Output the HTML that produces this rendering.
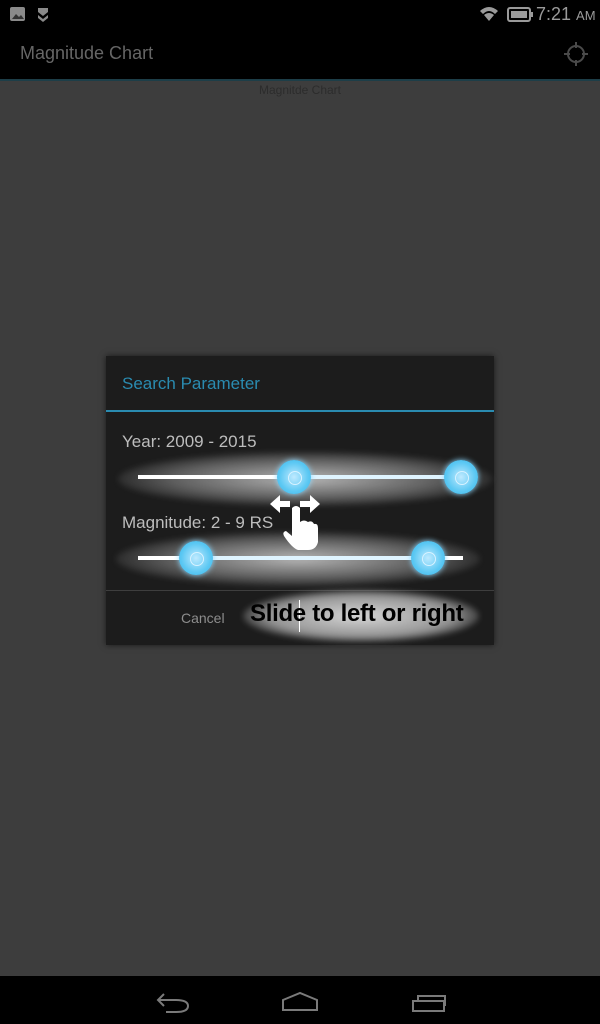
<!DOCTYPE html>
<html><head><meta charset="utf-8"><style>
*{margin:0;padding:0;box-sizing:border-box}
body{width:600px;height:1024px;background:#3d3d3d;position:relative;overflow:hidden;font-family:"Liberation Sans",sans-serif}
.abs{position:absolute}
.glow{position:absolute;background:radial-gradient(ellipse at center,rgba(220,220,220,.8) 0%,rgba(150,150,150,.55) 50%,rgba(40,40,40,0) 78%);border-radius:50%;filter:blur(3px)}
.knob{position:absolute;width:34px;height:34px;border-radius:50%;background:radial-gradient(circle,#bfeaff 0%,#5cc8f3 60%,#35b5ea 100%);box-shadow:0 0 6px #8fd9ff}
.knob:after{content:"";position:absolute;left:11px;top:11px;width:12px;height:12px;border-radius:50%;border:1px solid #d8f2ff}
</style></head><body>
<div class="abs" style="left:0;top:0;width:600px;height:79px;background:#000"></div>
<div class="abs" style="left:0;top:79px;width:600px;height:2px;background:#1d3e48"></div>
<svg class="abs" style="left:8px;top:5px" width="40" height="20"><rect x="2" y="2" width="15" height="14" rx="2" fill="#8a8a8a"/><path d="M4 14 L8 9 L11 12 L13 10 L16 14Z" fill="#333"/><path d="M30 3 L40 3 L40 7 L35 11 L30 7Z" fill="#8a8a8a"/><path d="M30 10 L35 14 L40 10 L40 13 L35 17 L30 13Z" fill="#8a8a8a"/></svg>
<svg class="abs" style="left:478px;top:3px" width="60" height="22"><path d="M2 8 Q11 0 20 8 L17 11 Q11 5 5 11Z M6 12 Q11 8 16 12 L11 18Z" fill="#9a9a9a"/><rect x="30" y="5" width="22" height="13" rx="2" fill="none" stroke="#9a9a9a" stroke-width="2"/><rect x="33" y="8" width="16" height="7" fill="#9a9a9a"/><rect x="53" y="9" width="2" height="5" fill="#9a9a9a"/></svg>
<div class="abs" style="left:536px;top:4px;color:#9a9a9a;font-size:18px">7:21 <span style="font-size:13px">AM</span></div>
<div class="abs" style="left:20px;top:43px;color:#666;font-size:18px">Magnitude Chart</div>
<svg class="abs" style="left:562px;top:40px" width="28" height="28"><circle cx="14" cy="14" r="8" fill="none" stroke="#4a4a4a" stroke-width="2"/><path d="M14 2V8M14 20V26M2 14H8M20 14H26" stroke="#4a4a4a" stroke-width="2"/></svg>
<div class="abs" style="left:0;top:83px;width:600px;text-align:center;color:#2c2c2c;font-size:12px">Magnitde Chart</div>

<div class="abs" style="left:106px;top:356px;width:388px;height:289px;background:#1c1c1c;box-shadow:0 0 6px rgba(0,0,0,.6)"></div>
<div class="abs" style="left:122px;top:374px;color:#2a8bb0;font-size:17px">Search Parameter</div>
<div class="abs" style="left:106px;top:410px;width:388px;height:2px;background:#2a8bb0"></div>
<div class="abs" style="left:122px;top:432px;color:#bdbdbd;font-size:17px">Year: 2009 - 2015</div>
<div class="glow" style="left:118px;top:452px;width:374px;height:54px"></div>
<div class="abs" style="left:138px;top:475px;width:325px;height:4px;background:#fff"></div>
<div class="abs" style="left:293px;top:475px;width:170px;height:4px;background:#dff4ff"></div>
<div class="knob" style="left:277px;top:460px"></div>
<div class="knob" style="left:444px;top:460px"></div>
<div class="abs" style="left:122px;top:513px;color:#bdbdbd;font-size:17px">Magnitude: 2 - 9 RS</div>
<div class="glow" style="left:116px;top:532px;width:364px;height:54px"></div>
<div class="abs" style="left:138px;top:556px;width:325px;height:4px;background:#fff"></div>
<div class="abs" style="left:196px;top:556px;width:232px;height:4px;background:#dff4ff"></div>
<div class="knob" style="left:179px;top:541px"></div>
<div class="knob" style="left:411px;top:541px"></div>
<svg class="abs" style="left:268px;top:492px" width="56" height="60"><path d="M2 12 L12 3 V9 H22 V15 H12 V21Z M52 12 L42 3 V9 H32 V15 H42 V21Z" fill="#fff"/><path d="M24 16 Q28 12 32 16 V30 Q36 27 40 30 Q44 28 46 32 Q50 31 50 36 V50 Q48 58 40 58 H30 Q24 56 16 44 Q14 40 18 39 L24 44Z" fill="#fff"/></svg>
<div class="abs" style="left:106px;top:590px;width:388px;height:1px;background:#3e3e3e"></div>
<div class="abs" style="left:181px;top:610px;color:#8d8d8d;font-size:14px">Cancel</div>
<div class="glow" style="left:243px;top:590px;width:236px;height:52px;background:radial-gradient(ellipse at center,rgba(235,235,235,.9) 0%,rgba(190,190,190,.75) 55%,rgba(40,40,40,0) 78%)"></div>
<div class="abs" style="left:299px;top:600px;width:1px;height:32px;background:#fff"></div>
<div class="abs" style="left:250px;top:600px;color:#000;font-size:24px;font-weight:bold;letter-spacing:-.3px">Slide to left or right</div>

<div class="abs" style="left:0;top:976px;width:600px;height:48px;background:#000"></div>
<svg class="abs" style="left:150px;top:988px" width="300" height="28"><path d="M8 12 H26 Q38 12 38 18 Q38 24 26 24 H16 M14 6 L8 12 L14 18" fill="none" stroke="#7a7a7a" stroke-width="2"/><path d="M133 22 V12 L150 5 L167 12 V22Z" fill="none" stroke="#7a7a7a" stroke-width="2"/><rect x="263" y="13" width="31" height="10" fill="none" stroke="#7a7a7a" stroke-width="2"/><path d="M268 12 V8 H295 V18" fill="none" stroke="#7a7a7a" stroke-width="2"/></svg>
</body></html>
